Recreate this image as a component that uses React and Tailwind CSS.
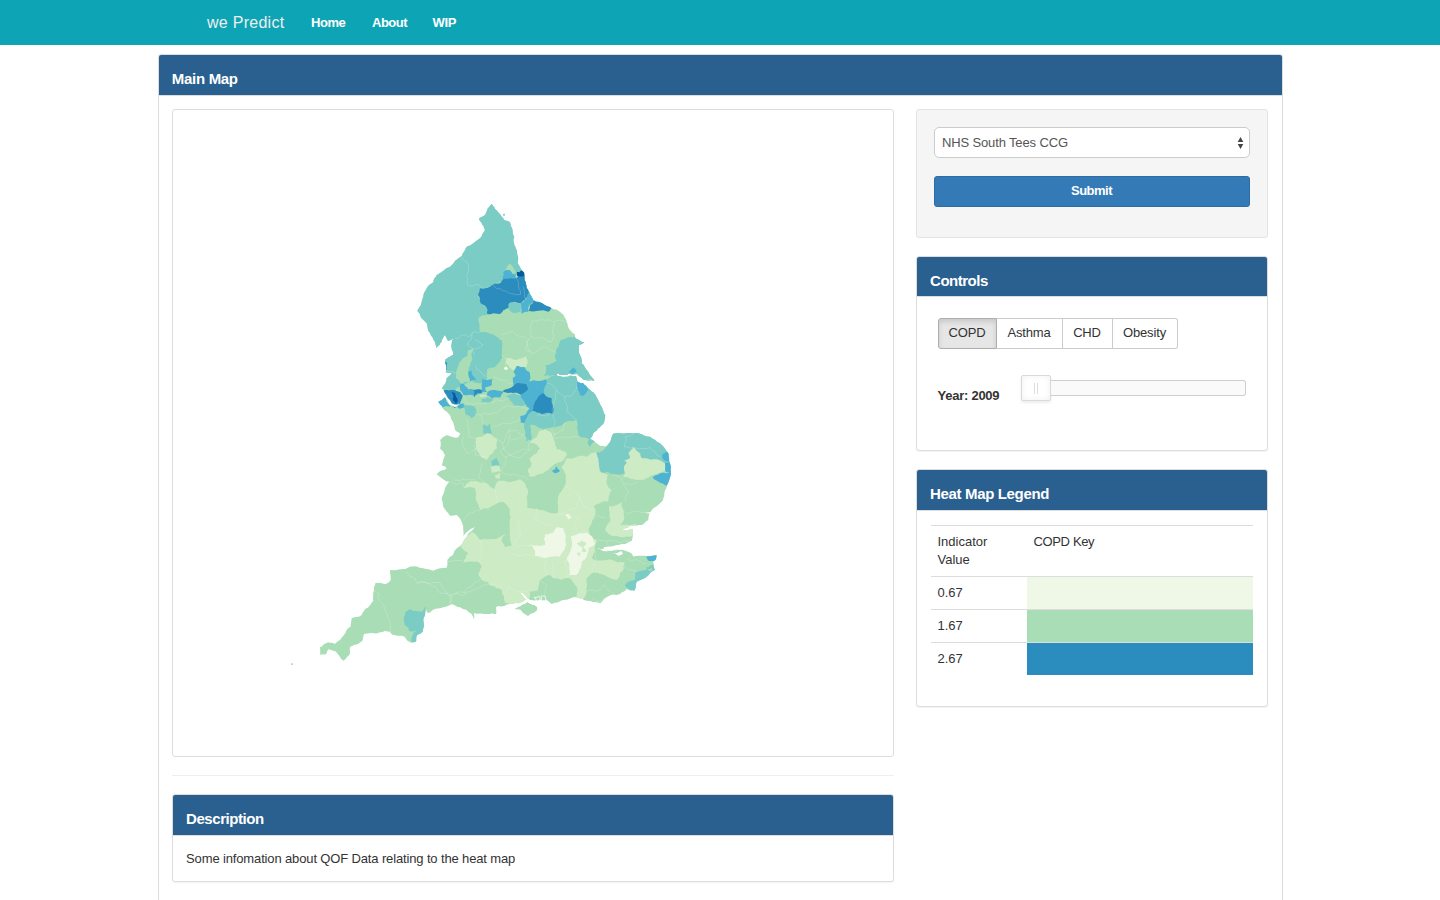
import React from "react";

const PALE = "#cdebc5";
const MINT = "#a9ddb5";
const TEAL = "#7bccc4";
const SKY = "#4eb3d3";
const BLUE = "#2b8cbe";
const NAVY = "#08589e";
const IVORY = "#eff8e7";

/* Subdivides every edge with a small repeatable offset so borders look surveyed. */
function border(points, amount = 0.13, closed = true) {
  let pts = points.split(" ").map((p) => p.split(",").map(Number));
  if (closed) pts.push(pts[0]);
  for (let pass = 0; pass < 2; pass++) {
    const next = [pts[0]];
    for (let i = 1; i < pts.length; i++) {
      const [ax, ay] = pts[i - 1];
      const [bx, by] = pts[i];
      const s = Math.sin(ax * 12.9898 + ay * 78.233 + bx * 3.7 + by * 5.1) * 43758.5453;
      const k = (s - Math.floor(s) - 0.5) * 2 * amount;
      next.push([(ax + bx) / 2 - (by - ay) * k, (ay + by) / 2 + (bx - ax) * k], pts[i]);
    }
    pts = next;
  }
  return "M" + pts.map(([x, y]) => x.toFixed(1) + " " + y.toFixed(1)).join("L") + (closed ? "Z" : "");
}

const COAST =
  "492,204 495,209 500,214 504,220 510,222 512,228 514.3,237 514.3,245 517,252 517.7,262 521,269 524.3,273 524.7,280 526.7,288 530,294 533.5,300 540,302.3 549.3,306.7 558.3,310.7 564,315.7 566.7,322 570,330 575,334.3 575.7,338.3 580,340.7 584.3,342.3 579,345 579,353 581.7,363.3 588.3,371.7 594.5,381 590,380.7 583,379.5 577,374 570,373.7 563,375 557,373.5 557,375.5 563,377 570,375.5 576,376 578,382 583,383 587.7,388.3 593.3,392.3 597.3,398.3 601.7,406.7 605.3,415 604.3,421.7 600,427.3 593.3,433.3 590,439 595,441.7 600,445.7 605,446.7 608.3,444 611.7,436.7 613.3,433.4 633.3,433.3 650,436.7 660,443.3 668.3,453.3 670,463.3 671,471.7 668.3,482.7 664.3,493.3 662.7,500.7 655,507.3 650,512.3 638.3,512.4 650,513.7 648.3,520 641.7,525 636,526 630,526 627,528 621,529 627,530.5 632.7,529 632.7,536.7 632,540.7 625,544 616.7,545 604,547 604,549 611,551 616,549 620,550 626,551 631.7,553.5 633.3,556.5 645,555.7 656.7,555 656,559.3 653.3,561.7 655,570 646.7,576.7 636.7,581.7 634.3,590.7 626.7,589 620,594 606.7,597.3 600,603.3 586.7,600.7 576.7,597.3 563.3,600 551.7,604 546.7,600 540,599.7 530,600 520,591.7 526,599.3 518.3,603.3 510,604 498.3,606 496,607.3 496,614 488.3,614 473.8,613.3 474,620 471.7,614 460,607.3 451.7,604.3 445,606.7 435,609 428,613 425.7,608.3 425,615 423.3,620 422.7,631.7 417.3,635 416,641.7 412.3,642.7 406.7,640 402.7,636 393.3,635 390,631.7 380,632.3 370,633.3 364,634 362.3,641 354,645 350,647.3 349.3,655 343.3,660.7 340,656.7 335,651 328.3,649.3 326,654.3 320,655 320,647.3 328.3,642.3 335,644 340,640 346.7,630 350.7,626.7 351.7,618.3 361.7,615 365,609 373.3,600.7 374,590 375.7,582.7 385,584.3 390.7,580 390,570 410,566.7 423.3,568.3 433.3,570.7 446.7,567.7 447.3,560 456.7,548.3 463.3,541.7 467,536 475,527.3 463.5,536 462.3,523.3 456.7,515 450,515.7 443.3,506.7 441.7,498.3 445,488.3 449.3,481.7 441.7,478.3 436.7,474.3 446.7,468.3 441.7,465 445,455 440,448.3 440,440 446.7,435 458.3,437.3 460,433.3 455,430 451.7,420 449,414 443.3,409 442,406 438.3,401.7 445,397.3 449,404 455,407.3 460,404 452,403.5 447,397 444,390.7 442,388.3 446.7,378.3 451.7,373.3 445.7,372.3 445,360 450,356.7 453,355 451.7,348.3 453.3,338.3 448.3,341 445,335 441.7,341.7 436.7,347.7 435,341.7 430,333.3 426.7,323.3 417.3,310.7 422.7,298.3 426.7,288.3 433.3,282.3 436.7,275 450,266.7 461.7,256 466.7,246.7 480,238.3 485,230 481.7,223.3 479,218.3 485,215 489.3,206.7";

/* Each sheet has its own origin and is drawn at three units to the pixel. */
const SHEETS = [
  {
    x: 400,
    y: 195,
    areas: [
      [TEAL, "-20,0 400,0 400,235 350,235 310,255 270,275 240,285 235,305 242,325 258,335 262,358 235,370 240,410 260,412 290,425 303,445 306,490 -20,490"],
      [TEAL, "483,435 530,428 580,440 560,490 467,490 475,455"],
      [MINT, "316,224 322,212 331,206 340,218 348,232 337,240 330,227"],
      [SKY, "308,252 310,230 328,224 337,236 347,237 347,254 325,255"],
      [BLUE, "345,250 355,243 385,243 386,290 388,294 375,315 362,325 350,322 335,322 327,338 310,345 300,357 262,358 258,335 242,325 240,310 234,300 240,280 270,275 300,265 310,252 330,250"],
      [NAVY, "350,230 358,232 368,225 380,238 380,244 352,243"],
      [TEAL, "327,325 345,322 362,326 364,353 345,355 325,342"],
      [SKY, "385,293 395,290 406,318 388,330 385,350 365,356 362,325 378,312"],
      [BLUE, "400,322 410,312 430,315 460,335 445,350 385,348 390,330"],
    ],
    lines: [
      "185,185 200,200 200,240 203,270 220,272 235,268 250,278",
      "278,270 290,282 300,280 320,290 362,298 360,285 355,262 350,250",
      "378,315 372,290 368,275",
      "240,412 220,412 205,425 190,420 165,430",
      "218,412 216,432 203,450 218,462 225,480",
      "395,378 390,395 395,425 380,440 395,480",
      "395,378 430,375 462,382 495,380",
      "465,385 462,420 455,440 430,430 395,425",
      "303,420 340,410 380,430",
    ],
  },
  {
    x: 400,
    y: 340,
    areas: [
      [TEAL, "100,0 305,0 305,45 300,65 285,82 262,88 262,112 245,130 215,122 185,135 165,150 100,152"],
      [MINT, "203,32 218,26 217,60 206,90 210,125 185,131 168,115 170,90 180,65 200,50"],
      [TEAL, "483,0 560,0 610,135 530,104 470,105 432,108 437,75 470,62 465,55 477,40 477,20"],
      [TEAL, "437,120 450,110 470,102 540,105 640,200 600,300 570,300 535,288 530,240 500,245 465,262 430,268 405,256 390,255 395,298 378,302 375,270 372,245 380,215 400,200"],
      [TEAL, "318,168 340,160 365,165 378,195 345,197 330,180"],
      [MINT, "262,88 285,80 335,97 342,130 310,150 280,148 276,120 262,112"],
      [PALE, "318,55 350,60 378,48 383,65 378,82 350,78 342,94 318,68"],
      [SKY, "340,95 350,78 372,80 387,95 390,105 388,125 437,118 441,130 432,162 412,175 400,195 397,213 388,220 378,236 372,250 362,248 360,228 380,220 388,205 375,190 362,165 345,155 340,132 338,115 347,105"],
      [BLUE, "308,153 340,138 350,130 378,132 385,148 370,160 345,158 320,158"],
      [BLUE, "400,195 412,175 432,160 440,170 455,175 458,222 425,222 397,212"],
      [SKY, "262,157 285,150 310,155 302,172 275,176 260,165"],
      [SKY, "247,117 277,117 276,135 256,142 260,155 245,155 245,135"],
      [SKY, "205,95 215,92 229,120 210,125"],
      [SKY, "182,132 192,132 205,148 240,150 262,155 230,165 190,165 180,150"],
      [BLUE, "220,150 245,150 245,160 230,160 222,172"],
      [PALE, "240,163 258,163 260,170 240,172"],
      [TEAL, "245,176 280,175 270,188 245,188"],
      [BLUE, "130,150 165,150 180,156 188,168 180,190 165,205 150,185 140,165"],
      [NAVY, "153,155 165,160 173,182 167,194 160,182 160,168"],
      [SKY, "170,192 190,190 196,200 175,205"],
      [SKY, "110,185 135,165 152,200 125,204"],
      [TEAL, "190,195 225,200 230,218 215,235 195,220"],
      [BLUE, "132,65 140,66 141,88 134,91"],
      [TEAL, "250,254 262,258 270,250 272,266 276,280 250,282"],
      [TEAL, "274,364 290,354 300,378 275,376"],
      [SKY, "530,127 548,126 566,145 550,167 540,166 533,145"],
      [SKY, "505,95 520,82 530,95 520,102"],
      [PALE, "228,293 245,290 262,280 290,295 291,325 270,345 260,360 240,345 228,320"],
      [TEAL, "568,298 582,303 570,320 563,310"],
      ["#ffffff", "312,82 320,80 324,86 318,90 313,88"],
    ],
    lines: [
      "215,26 250,15 225,0",
      "225,75 240,95 262,110",
      "135,95 150,95 170,97",
      "305,45 320,60 318,80",
      "280,110 310,120 340,130",
      "437,128 470,150 495,170 520,160 530,130",
      "470,150 462,190 458,222",
      "495,170 500,215 530,240",
      "458,222 460,262",
      "410,225 450,222",
      "190,170 200,190 240,192 290,180 330,175",
      "225,218 260,222 300,210 350,200 385,210",
      "240,225 250,252",
      "275,265 310,250 350,245 365,225",
      "290,300 310,310 320,280 345,270 375,285",
      "200,235 205,290 228,295",
      "190,290 200,340 228,325",
      "305,310 330,345 365,350 400,320",
      "455,268 465,295 520,290 540,290",
      "380,0 375,30 400,40 430,20 470,40",
    ],
  },
  {
    x: 420,
    y: 420,
    areas: [
      [PALE, "330,68 350,52 355,35 375,28 395,40 405,65 410,88 440,100 435,115 410,130 385,150 350,165 330,172 323,150 335,130 328,115 350,100 360,85 352,75"],
      [PALE, "133,205 140,190 165,182 200,190 222,208 235,182 300,178 325,210 322,262 345,265 395,280 412,280 412,245 430,205 438,165 425,140 440,115 500,110 528,95 538,155 565,165 560,190 575,210 565,245 545,247 522,258 525,285 515,310 505,330 520,400 270,400 275,300 268,265 250,245 205,265 180,268 168,240 165,205"],
      [MINT, "330,200 355,165 385,150 410,150 436,165 430,195 412,225 412,278 395,280 385,262 365,250 345,268 322,262"],
      [SKY, "394,152 405,148 410,139 420,153 405,160"],
      [TEAL, "528,98 565,75 565,45 590,30 700,40 760,90 760,125 745,125 740,140 700,125 660,115 640,130 615,160 580,162 545,158 535,120"],
      [PALE, "608,172 615,160 612,140 620,130 612,120 630,115 625,100 640,82 660,100 665,115 700,118 737,132 735,152 700,165 670,180 640,178"],
      [SKY, "727,103 745,90 760,125 730,118"],
      [SKY, "735,130 755,120 765,158 737,155"],
      [SKY, "698,172 730,158 765,155 750,200 720,188"],
      [PALE, "567,258 605,247 610,270 612,300 600,315 650,312 650,345 610,352 570,345 555,330 572,300"],
      [TEAL, "505,58 525,62 510,80"],
      [TEAL, "215,122 228,114 240,135 217,136"],
      [PALE, "212,140 238,137 242,155 215,158"],
      [PALE, "225,165 242,160 240,175 228,176"],
      [IVORY, "435,285 447,281 455,293 445,298"],
    ],
    lines: [
      "100,180 140,180 165,178",
      "90,185 130,190 135,205",
      "130,300 170,270 185,268",
      "200,265 210,270",
      "160,75 165,105 195,110",
      "185,130 175,165 200,190",
      "240,95 260,110 245,155 270,165 325,178",
      "270,25 265,70 240,95",
      "260,110 290,95 325,90",
      "325,90 325,60 305,50 270,60",
      "432,195 455,210 480,235 500,265 520,268",
      "480,235 470,262 440,270 415,285",
      "350,265 345,300 370,310 400,318",
      "225,210 235,245",
      "580,165 605,175 610,190 640,190 655,185",
      "610,190 625,215 615,245",
      "610,272 650,275 690,278",
      "612,80 615,50 640,42",
      "612,80 650,85 690,82 720,110",
      "525,285 560,295",
      "475,290 460,315 475,340 505,335",
      "440,5 430,30 400,42",
    ],
  },
  {
    x: 420,
    y: 520,
    areas: [
      [PALE, "270,-5 530,-10 505,25 510,50 530,60 525,90 515,115 570,118 615,128 610,150 600,160 590,180 540,162 515,160 500,175 500,215 490,240 470,240 470,200 450,175 400,175 385,165 360,180 355,210 330,215 330,250 290,260 255,248 245,210 215,198 185,180 175,165 185,140 175,125 130,128 145,100 122,80 130,60 155,35 180,60 205,58 250,45 270,40"],
      [MINT, "248,50 268,38 276,75 255,82 245,65"],
      [IVORY, "375,42 400,38 410,22 430,25 436,60 433,90 420,110 385,112 345,108 345,92 332,74 360,78 375,75"],
      [IVORY, "453,48 480,40 500,38 518,52 525,70 505,85 500,110 485,125 478,150 470,165 447,167 448,140 440,120 455,80"],
      [PALE, "470,70 485,62 500,72 490,80 500,95 485,95 488,82"],
      [PALE, "470,100 482,98 478,110"],
      [TEAL, "645,158 680,150 680,142 705,136 720,160 643,220 615,195 625,185 645,180"],
      [MINT, "684,147 696,144 696,152 687,154"],
      [SKY, "678,110 720,98 712,122 685,122"],
      ["#ffffff", "576,96 590,99 605,94 609,102 596,107 588,102"],
      ["#ffffff", "530,84 545,88 570,86 600,80 640,72 640,92 612,90 600,86 575,92 545,91"],
    ],
    lines: [
      "80,123 130,120",
      "160,45 182,62 182,90 175,125",
      "-10,190 60,188 95,230 88,252",
      "95,230 150,215 245,200",
      "245,225 270,200 325,210",
      "275,100 340,108",
      "290,80 335,75",
      "300,0 300,50 280,75",
      "400,125 400,175",
      "380,115 385,165",
      "525,90 530,120 515,160",
      "500,215 530,215 550,195 570,215",
      "515,235 540,245 560,230",
      "560,62 600,68 635,55",
      "610,130 650,155",
      "620,115 640,120 680,130",
      "530,60 560,65 565,80",
      "360,180 380,200 378,235",
      "440,175 435,120",
    ],
  },
  {
    x: 280,
    y: 540,
    areas: [[TEAL, "376,215 390,208 400,214 425,215 437,200 445,225 435,250 430,282 415,290 405,315 394,305 398,285 408,270 388,274 385,262 375,256"]],
    lines: [
      "283,150 297,160 300,185 325,235 332,278",
      "383,95 390,110 415,128 440,128 475,155 510,165 512,192",
      "510,165 555,165 560,145 600,120",
    ],
  },
];

function EnglandMap() {
  return (
    <svg className="block h-full w-full" viewBox="173 110 720 646" role="img">
      <defs>
        <clipPath id="coast">
          <path d={border(COAST, 0.1)} />
        </clipPath>
      </defs>
      <g clipPath="url(#coast)">
        <rect x="173" y="110" width="720" height="646" fill={MINT} />
        {SHEETS.map((sheet) => (
          <g key={sheet.x + "-" + sheet.y} transform={"translate(" + sheet.x + " " + sheet.y + ") scale(0.33333)"}>
            {sheet.areas.map(([fill, pts], i) => (
              <path key={i} d={border(pts)} fill={fill} />
            ))}
          </g>
        ))}
        {SHEETS.map((sheet) => (
          <g key={sheet.x + "-" + sheet.y} transform={"translate(" + sheet.x + " " + sheet.y + ") scale(0.33333)"}>
            {sheet.lines.map((pts, i) => (
              <path key={i} d={border(pts, 0.18, false)} fill="none" stroke="#ffffff" strokeOpacity="0.25" strokeWidth="2.4" />
            ))}
          </g>
        ))}
      </g>
      <path d={border("515,608.5 522,605 527,602 531,604 537,607 536.5,611 533,613 528.5,616 523,613 519,609.5")} fill={MINT} />
      <path d="M534 597l3 1 1-2 2 1v3l-3 1zM541 596h4l1 4-4 1z" fill={MINT} stroke="#fff" strokeWidth=".7" />
      <path d="M503 214l1.5-.5.5 2-1.5.5z" fill={TEAL} />
      <path d="M291 663.3h1.8v1.6H291z" fill={MINT} />
    </svg>
  );
}

function Heading({ children, className = "" }) {
  return (
    <div className={"rounded-t-[2px] border-b border-[#dddddd] bg-[#29608f] pt-[14px] text-[15px] leading-5 font-bold text-white " + className}>
      <h3>{children}</h3>
    </div>
  );
}

function Panel({ title, className = "", headClass = "h-[41px] pl-[13.6px] tracking-[-0.45px]", children }) {
  return (
    <section className={"rounded-[3px] border border-[#dddddd] bg-white shadow-[0_1px_1px_rgba(0,0,0,0.05)] " + className}>
      <Heading className={headClass}>{title}</Heading>
      {children}
    </section>
  );
}

const LEGEND = [
  ["0.67", "bg-[#eff8e7]"],
  ["1.67", "bg-[#a9ddb5]"],
  ["2.67", "bg-[#2b8cbe]"],
];

export default function App() {
  return (
    <div className="h-[900px] w-full overflow-hidden bg-white font-['Liberation_Sans',Arial,sans-serif] text-[13px] leading-[18px] tracking-[-0.14px] text-[#333333]">
      <nav className="flex h-[45px] items-start bg-[#0da5b5] pl-[207px] font-bold text-white">
        <a className="w-[104px] pt-[14px] text-[16px] font-normal tracking-[0.27px] text-[#eeeeee]">we Predict</a>
        <a className="w-[61px] pt-[14px] tracking-[-0.45px]">Home</a>
        <a className="w-[60.5px] pt-[14px] tracking-[-0.5px]">About</a>
        <a className="pt-[14px] tracking-[-0.3px]">WIP</a>
      </nav>

      <main className="mx-auto mt-[9px] w-[1125px]">
        <Panel title="Main Map" headClass="h-[41px] pl-[13.3px] tracking-[-0.3px]" className="h-[900px]">
          <div className="flex items-start gap-[22px] px-[13px] pt-[13px]">
            <div className="w-[722px]">
              <div className="h-[648px] rounded-[3px] border border-[#dddddd]">
                <EnglandMap />
              </div>
              <hr className="my-[18px] border-t border-[#eeeeee]" />
              <Panel title="Description" className="h-[88px]">
                <p className="pt-[14px] pl-[13.6px]">Some infomation about QOF Data relating to the heat map</p>
              </Panel>
            </div>

            <aside className="w-[352px]">
              <div className="h-[129px] rounded-[3px] border border-[#e3e3e3] bg-[#f5f5f5] px-[17px] pt-[17px]">
                <div className="flex h-[31px] items-center justify-between rounded-[5px] border border-[#cccccc] bg-white pr-[5px] pl-[7.5px] text-[#555555]">
                  <span>NHS South Tees CCG</span>
                  <svg className="h-3 w-[7px]" viewBox="0 0 7 12">
                    <path d="M3.5 0L6.3 5H.7zM3.5 12L.7 7h5.6z" fill="#444" />
                  </svg>
                </div>
                <button className="mt-[18px] block h-[31px] w-full rounded-[3px] border border-[#2e6da4] bg-[#337ab7] pb-px text-center font-bold tracking-[-0.5px] text-white">
                  Submit
                </button>
              </div>

              <Panel title="Controls" headClass="h-[40px] pl-[13.6px] tracking-[-0.5px]" className="mt-[18px] h-[195px]">
                <div className="flex px-[21px] pt-[21px] text-center">
                  <button className="h-[31px] w-[59px] rounded-l-[3px] border border-[#adadad] bg-[#e6e6e6] pb-px shadow-[inset_0_3px_5px_rgba(0,0,0,0.125)]">COPD</button>
                  <button className="h-[31px] w-[66px] border border-l-0 border-[#cccccc] pb-px">Asthma</button>
                  <button className="h-[31px] w-[50px] border border-l-0 border-[#cccccc] pb-px">CHD</button>
                  <button className="h-[31px] w-[65px] rounded-r-[3px] border border-l-0 border-[#cccccc] pb-px">Obesity</button>
                </div>
                <div className="flex items-start pt-[26px] pl-[21px]">
                  <span className="w-[83px] pt-[12px] font-bold tracking-[-0.25px]">Year: 2009</span>
                  <div className="flex items-start">
                    <div className="flex h-[26px] w-[30px] items-center justify-center gap-[2px] rounded-[2px] border border-[#d9d9d9] bg-white shadow-[inset_0_0_6px_#f0f0f0,0_2px_3px_#eeeeee]">
                      <i className="h-[11px] w-px bg-[#dddddd]" />
                      <i className="h-[11px] w-px bg-[#dddddd]" />
                    </div>
                    <div className="mt-[5px] h-4 w-[195px] rounded-r-[3px] border border-l-0 border-[#cfcfcf] bg-[#fafafa]" />
                  </div>
                </div>
              </Panel>

              <Panel title="Heat Map Legend" headClass="h-[41px] pl-[13.6px] tracking-[-0.35px]" className="mt-[18px] h-[238px]">
                <div className="px-[14px] pt-[14px]">
                  <div className="grid grid-cols-[96px_1fr] border-t border-[#dddddd] pt-[7px] pb-[7px]">
                    <span className="w-[70px] pl-[7px] tracking-normal">Indicator Value</span>
                    <span className="pl-[7px] tracking-[-0.35px]">COPD Key</span>
                  </div>
                  {LEGEND.map(([value, colour]) => (
                    <div key={value} className="grid h-[33px] grid-cols-[96px_1fr] border-t border-[#dddddd]">
                      <span className="pt-[7px] pl-[7px] tracking-normal">{value}</span>
                      <span className={colour} />
                    </div>
                  ))}
                </div>
              </Panel>
            </aside>
          </div>
        </Panel>
      </main>
    </div>
  );
}
